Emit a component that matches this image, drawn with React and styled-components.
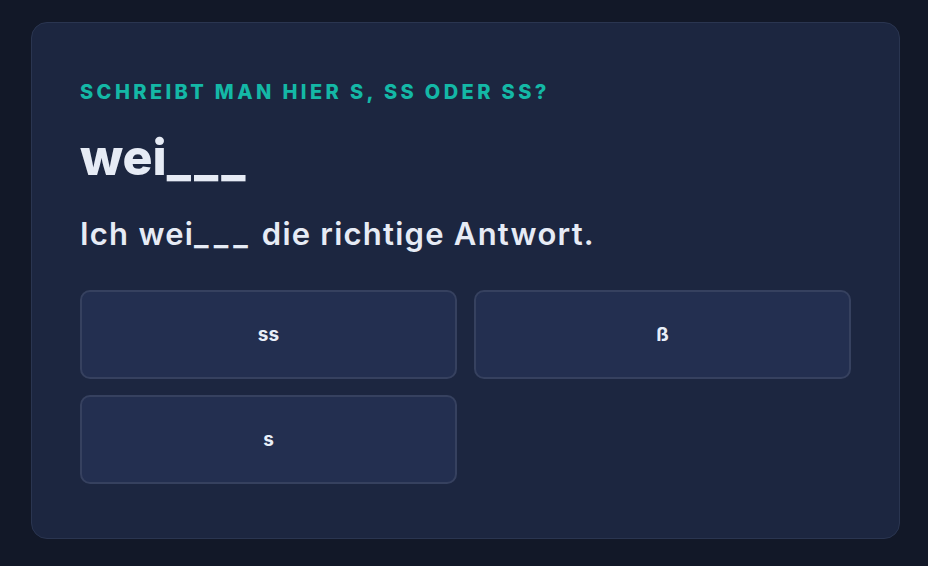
import React from "react";
import styled, { createGlobalStyle } from "styled-components";

const Global = createGlobalStyle`
  html, body {
    margin: 0;
    padding: 0;
    background: #121828;
  }
  body {
    font-family: "Inter", "Noto Sans", sans-serif;
    -webkit-font-smoothing: antialiased;
  }
  * { box-sizing: border-box; }
`;

const Page = styled.div`
  min-height: 566px;
  padding: 22px 28px 22px 31px;
`;

const Card = styled.section`
  background: #1c2640;
  border: 1px solid #2a3550;
  border-radius: 16px;
  padding: 55px 48px 54px;
`;

const Prompt = styled.p`
  margin: 0;
  color: #14b8a6;
  font-size: 20px;
  font-weight: 800;
  letter-spacing: 0.17em;
  text-transform: uppercase;
  line-height: 28px;
`;

const Word = styled.h1`
  margin: 21px 0 0;
  color: #e6ebf5;
  font-size: 50px;
  font-weight: 800;
  line-height: 60px;
`;

const Sentence = styled.p`
  margin: 27px 0 0;
  color: #e6ebf5;
  font-size: 31px;
  font-weight: 600;
  letter-spacing: 0.04em;
  line-height: 40px;
`;

/* the gap to fill, drawn as spaced underscores */
const Blank = styled.span`
  letter-spacing: ${(p) => p.$spread}px;
`;

const Options = styled.div`
  margin-top: 36px;
  display: grid;
  grid-template-columns: 1fr 1fr;
  gap: 16px 17px;
`;

const Option = styled.button`
  height: 89px;
  border: 2px solid #36415f;
  border-radius: 10px;
  background: #232f50;
  color: #e8eef8;
  font-family: inherit;
  font-size: 19px;
  font-weight: 700;
  cursor: pointer;
`;

const choices = ["ss", "ß", "s"];

export default function App() {
  return (
    <>
      <Global />
      <Page>
        <Card>
          <Prompt>Schreibt man hier s, ss oder ß?</Prompt>
          <Word>
            wei<Blank $spread={3}>___</Blank>
          </Word>
          <Sentence>
            Ich wei<Blank $spread={5}>___</Blank> die richtige Antwort.
          </Sentence>
          <Options>
            {choices.map((c) => (
              <Option key={c}>{c}</Option>
            ))}
          </Options>
        </Card>
      </Page>
    </>
  );
}
